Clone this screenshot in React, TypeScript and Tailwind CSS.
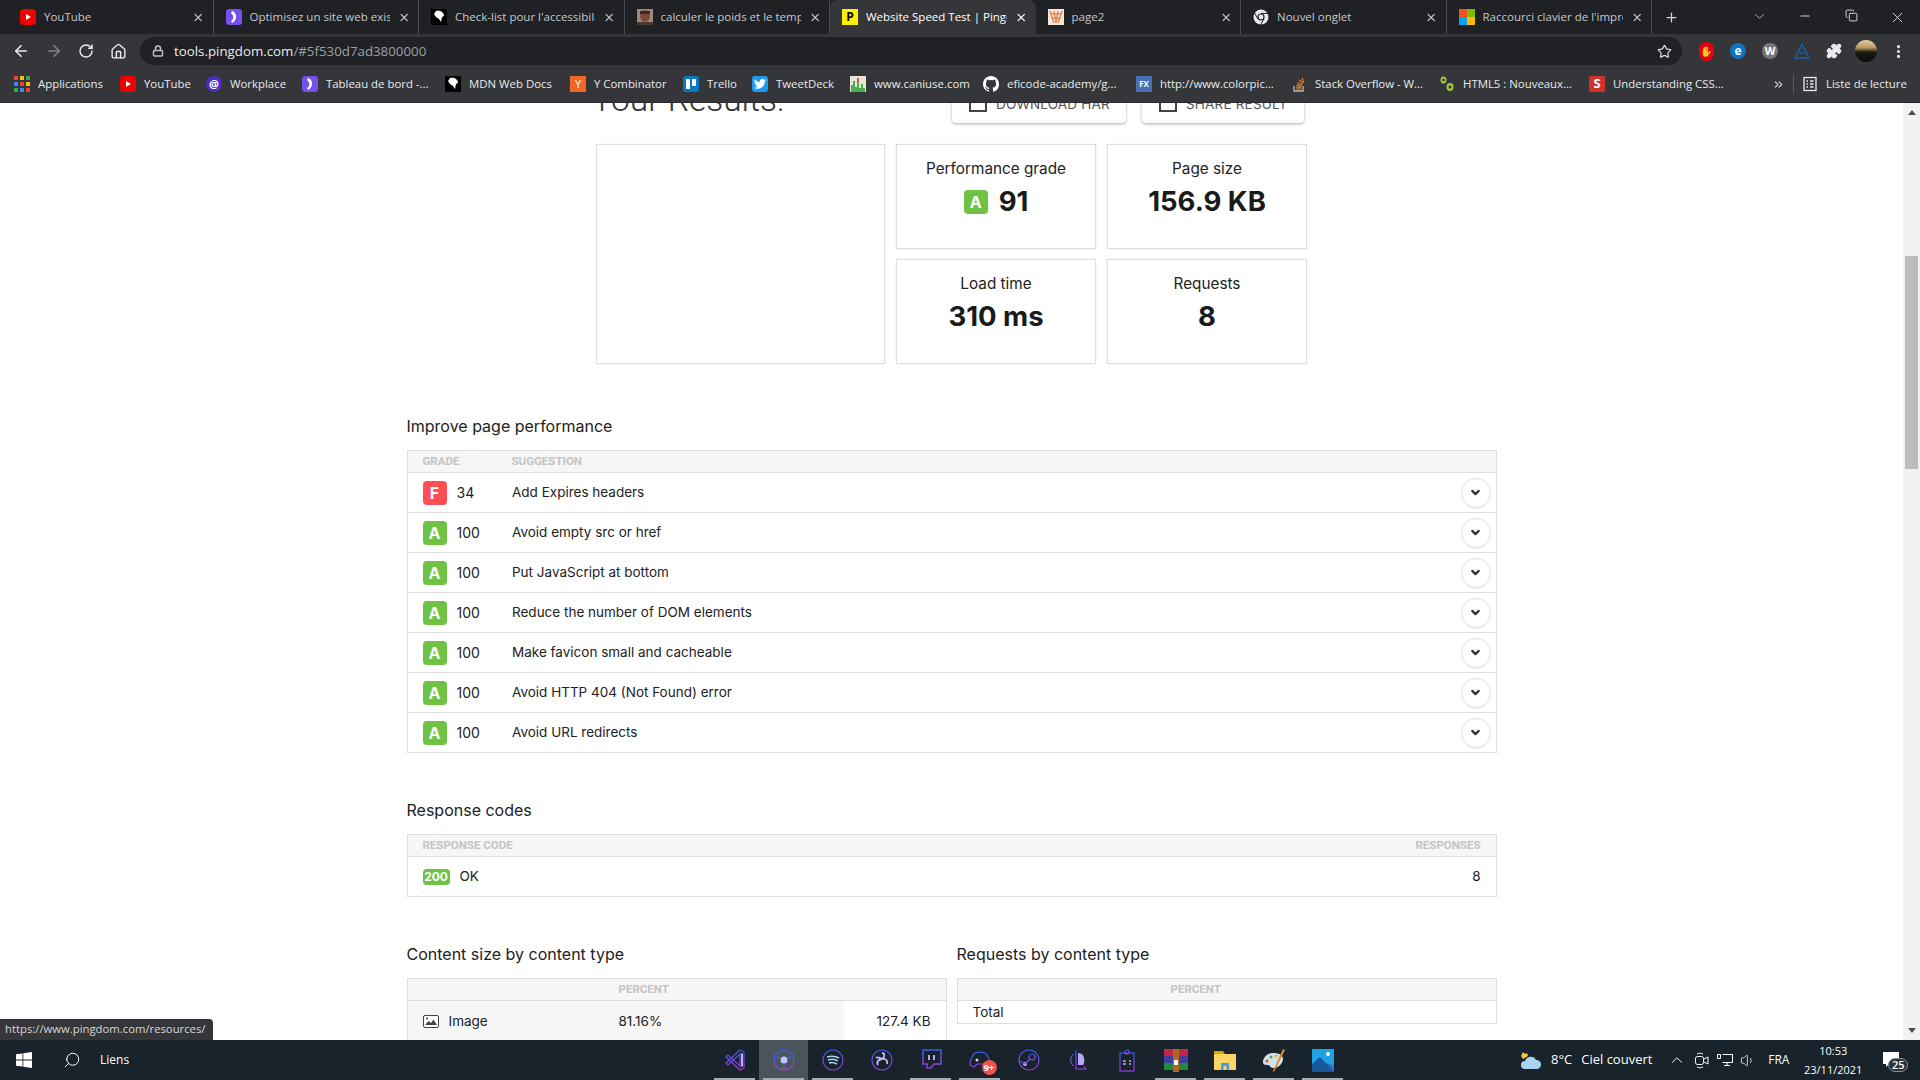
import type { ReactNode } from "react";
import {
  ArrowLeft,
  ArrowRight,
  ChevronDown,
  ChevronUp,
  ChevronsRight,
  Copy,
  Home,
  Lock,
  Minus,
  MoreVertical,
  Plus,
  Puzzle,
  RotateCw,
  Search,
  Star,
  Volume1,
  X,
} from "lucide-react";

const Box = ({ className, children }: { className: string; children?: ReactNode }) => (
  <span className={`flex h-4 w-4 shrink-0 items-center justify-center overflow-hidden ${className}`}>{children}</span>
);

const YoutubeIcon = () => (
  <Box className="rounded-[4px] bg-[#f00000]">
    <svg width="8" height="8" viewBox="0 0 8 8"><path d="M2 1l5 3-5 3z" fill="#fff" /></svg>
  </Box>
);
const ClassroomIcon = () => (
  <Box className="rounded-[3px] bg-[#7451eb]">
    <svg width="12" height="14" viewBox="0 0 12 14"><path d="M4 1c5 1 6 9 0 12l-1-2c3-1 3-6 0-8z" fill="#fff" /></svg>
  </Box>
);
const DinoIcon = () => (
  <Box className="bg-black">
    <svg width="12" height="14" viewBox="0 0 12 14"><path d="M3 1c4-1 8 1 8 5l-2 1-1 5-2-3-3-2-2-3z" fill="#fff" /></svg>
  </Box>
);
const PortraitIcon = () => (
  <Box className="bg-[#8b6b5c]">
    <svg width="16" height="16" viewBox="0 0 16 16">
      <rect width="16" height="16" fill="#9a8a80" />
      <ellipse cx="8" cy="7" rx="5" ry="6" fill="#7c4a3a" />
      <rect x="3" y="2" width="10" height="3" fill="#3d2a22" />
      <rect y="13" width="16" height="3" fill="#4a3a34" />
    </svg>
  </Box>
);
const PingdomIcon = () => (
  <Box className="bg-[#fff000] text-[12px] font-bold text-black">P</Box>
);
const Page2Icon = () => (
  <Box className="bg-[#f6e6d8]">
    <svg width="14" height="14" viewBox="0 0 14 14" fill="none" stroke="#d98a5a" strokeWidth="1.4">
      <path d="M1 1l4 12M5 1l2 12M9 1l-2 12M13 1L9 13M1 4h12M2 8h10" />
    </svg>
  </Box>
);
const ChromeIcon = () => (
  <svg width="16" height="16" viewBox="0 0 16 16" className="shrink-0">
    <circle cx="8" cy="8" r="7.5" fill="#e8eaed" />
    <circle cx="8" cy="8" r="3.6" fill="#202124" />
    <circle cx="8" cy="8" r="2.4" fill="#e8eaed" />
    <path d="M8 4.4h7M5 10l-3.4-6M11 10l-3.5 5.8" stroke="#202124" strokeWidth="1" />
  </svg>
);
const MicrosoftIcon = () => (
  <span className="grid h-4 w-4 shrink-0 grid-cols-2">
    <span className="bg-[#f25022]" />
    <span className="bg-[#7fba00]" />
    <span className="bg-[#00a4ef]" />
    <span className="bg-[#ffb900]" />
  </span>
);

const tabs = [
  { title: "YouTube", icon: <YoutubeIcon /> },
  { title: "Optimisez un site web existant", icon: <ClassroomIcon /> },
  { title: "Check-list pour l'accessibilité", icon: <DinoIcon /> },
  { title: "calculer le poids et le temps", icon: <PortraitIcon /> },
  { title: "Website Speed Test | Pingdom", icon: <PingdomIcon />, active: true },
  { title: "page2", icon: <Page2Icon /> },
  { title: "Nouvel onglet", icon: <ChromeIcon /> },
  { title: "Raccourci clavier de l'impression", icon: <MicrosoftIcon /> },
];

const AppsIcon = () => (
  <span className="grid h-4 w-4 shrink-0 grid-cols-3 gap-[2px]">
    {["#ea4335", "#fbbc05", "#34a853", "#4285f4", "#ea4335", "#fbbc05", "#34a853", "#4285f4", "#ea4335"].map((c, i) => (
      <span key={i} style={{ backgroundColor: c }} />
    ))}
  </span>
);

const bookmarks = [
  { label: "Applications", width: "w-[106px]", icon: <AppsIcon /> },
  { label: "YouTube", width: "w-[86px]", icon: <YoutubeIcon /> },
  {
    label: "Workplace",
    width: "w-[96px]",
    icon: <Box className="rounded-full bg-[#4a2fc4] text-[11px] font-bold text-white">@</Box>,
  },
  { label: "Tableau de bord -...", width: "w-[143px]", icon: <ClassroomIcon /> },
  { label: "MDN Web Docs", width: "w-[125px]", icon: <DinoIcon /> },
  { label: "Y Combinator", width: "w-[113px]", icon: <Box className="bg-[#f26522] text-[11px] text-white">Y</Box> },
  {
    label: "Trello",
    width: "w-[69px]",
    icon: (
      <Box className="gap-[2px] rounded-[3px] bg-[#0a79bf]">
        <span className="h-[10px] w-[4px] bg-white" />
        <span className="mb-[3px] h-[7px] w-[4px] bg-white" />
      </Box>
    ),
  },
  {
    label: "TweetDeck",
    width: "w-[98px]",
    icon: (
      <Box className="rounded-[3px] bg-[#1d9bf0]">
        <svg width="12" height="10" viewBox="0 0 24 20">
          <path d="M24 2.4a10 10 0 0 1-2.8.8A5 5 0 0 0 23.300.500a10 10 0 0 1-3.100 1.200 4.900 4.900 0 0 0-8.400 4.500A14 14 0 0 1 1.700.900a4.900 4.900 0 0 0 1.500 6.600 5 5 0 0 1-2.200-.6 4.900 4.900 0 0 0 3.900 4.900 5 5 0 0 1-2.200.1 4.900 4.900 0 0 0 4.600 3.400A10 10 0 0 1 0 17.300 14 14 0 0 0 21.500 5c1-.7 1.800-1.600 2.500-2.600z" fill="#fff" />
        </svg>
      </Box>
    ),
  },
  {
    label: "www.caniuse.com",
    width: "w-[133px]",
    icon: (
      <Box className="bg-[#e8e4d6]">
        <svg width="16" height="16" viewBox="0 0 16 16">
          <path d="M1 16V9h2V5h2v6h2V2h2v10h2V8h2v4h2v4z" fill="#4caf50" />
          <path d="M7 2h2v5H7z" fill="#b5654a" />
        </svg>
      </Box>
    ),
  },
  {
    label: "eficode-academy/g...",
    width: "w-[153px]",
    icon: (
      <svg width="16" height="16" viewBox="0 0 16 16" className="shrink-0">
        <path
          fill="#fff"
          d="M8 0C3.580 0 0 3.580 0 8c0 3.540 2.290 6.530 5.470 7.590.4.070.55-.17.55-.38v-1.340c-2.010.37-2.530-.49-2.690-.94-.09-.23-.48-.94-.82-1.130-.28-.15-.68-.52-.01-.53.63-.01 1.080.58 1.230.82.720 1.210 1.870.87 2.330.66.070-.52.28-.87.510-1.070-1.780-.2-3.640-.89-3.640-3.950 0-.87.310-1.590.820-2.150-.080-.2-.360-1.020.080-2.120 0 0 .670-.21 2.200.82a7.600 7.600 0 0 1 4 0c1.530-1.040 2.200-.82 2.200-.82.440 1.100.160 1.920.080 2.120.510.560.820 1.270.820 2.150 0 3.070-1.870 3.750-3.650 3.950.290.250.540.730.540 1.480v2.190c0 .210.150.460.550.380A8 8 0 0 0 16 8c0-4.420-3.580-8-8-8z"
        />
      </svg>
    ),
  },
  {
    label: "http://www.colorpic...",
    width: "w-[155px]",
    icon: <Box className="bg-[#4a6fb5] text-[8px] font-bold text-white">FX</Box>,
  },
  {
    label: "Stack Overflow - W...",
    width: "w-[148px]",
    icon: (
      <svg width="16" height="16" viewBox="0 0 16 16" fill="none" className="shrink-0">
        <path d="M3 10v5h9v-5" stroke="#bcbbbb" strokeWidth="1.3" />
        <path d="M5 13h5M5 11l5 .6M5.500 8.800l5 1.400M6.500 6.500l4.500 2.600M8.500 4l3.500 3.600M11 2l2 4.600" stroke="#f48024" strokeWidth="1.2" />
      </svg>
    ),
  },
  {
    label: "HTML5 : Nouveaux...",
    width: "w-[150px]",
    icon: (
      <svg width="16" height="16" viewBox="0 0 16 16" className="shrink-0">
        <ellipse cx="4.500" cy="4" rx="3" ry="3.500" fill="#a5c63b" />
        <ellipse cx="11" cy="11" rx="3.500" ry="4" fill="#a5c63b" />
        <circle cx="4.500" cy="4" r="1.300" fill="#35363a" />
        <circle cx="11" cy="11" r="1.500" fill="#35363a" />
      </svg>
    ),
  },
  {
    label: "Understanding CSS...",
    width: "w-[183px]",
    icon: <Box className="rounded-[2px] bg-[#d3322c] text-[13px] font-bold text-white">S</Box>,
  },
];

const suggestions = [
  { grade: "F", score: 34, text: "Add Expires headers" },
  { grade: "A", score: 100, text: "Avoid empty src or href" },
  { grade: "A", score: 100, text: "Put JavaScript at bottom" },
  { grade: "A", score: 100, text: "Reduce the number of DOM elements" },
  { grade: "A", score: 100, text: "Make favicon small and cacheable" },
  { grade: "A", score: 100, text: "Avoid HTTP 404 (Not Found) error" },
  { grade: "A", score: 100, text: "Avoid URL redirects" },
];

const Neon = ({ children }: { children: ReactNode }) => (
  <svg width="24" height="24" viewBox="0 0 24 24" fill="none" stroke="url(#neon)" strokeWidth="1.2">
    {children}
  </svg>
);

const taskbarApps: { key: string; icon: ReactNode; running?: boolean; active?: boolean }[] = [
  {
    key: "vscode",
    running: true,
    icon: (
      <Neon>
        <path d="M17 2l4 2v16l-4 2L3 9l2-2 12 11V6L5 17l-2-2z" />
        <path d="M18 5v14l2-1V6z" fill="#c7a6ff" stroke="none" />
      </Neon>
    ),
  },
  {
    key: "browser",
    running: true,
    active: true,
    icon: (
      <Neon>
        <circle cx="12" cy="12" r="10" />
        <circle cx="12" cy="12" r="3.500" fill="#b9c9ff" stroke="none" />
        <path d="M3 7l6 5M21 7l-6 5M12 15v7" />
      </Neon>
    ),
  },
  {
    key: "spotify",
    running: true,
    icon: (
      <Neon>
        <circle cx="12" cy="12" r="10" />
        <path d="M6 9c4-1 8-1 12 1M7 12c3-1 7-1 10 1M8 15c3-1 5-.5 8 1" stroke="#a9d8ff" strokeWidth="1.500" />
      </Neon>
    ),
  },
  {
    key: "obs",
    icon: (
      <Neon>
        <circle cx="12" cy="12" r="10" />
        <path d="M12 5c3 0 3 4 0 6-3 0-6 3-4 6M12 11c4-1 6 2 5 5M12 11c-3-2-5-2-6-1" stroke="#c8b6ff" strokeWidth="1.800" />
      </Neon>
    ),
  },
  {
    key: "twitch",
    running: true,
    icon: (
      <Neon>
        <path d="M4 2h18v14h-7l-3 4H8v-4H4z" strokeWidth="1.500" />
        <path d="M10 7v5M15 7v5" stroke="#c8b6ff" strokeWidth="1.800" />
      </Neon>
    ),
  },
  {
    key: "discord",
    running: true,
    icon: (
      <span className="relative flex">
        <Neon>
          <path d="M7 5c3-1 7-1 10 0 3 3 5 8 5 12l-4 2-3-3H9l-3 3-4-2c0-4 2-9 5-12z" />
          <circle cx="9" cy="12" r="1.500" fill="#c8d6ff" stroke="none" />
        </Neon>
        <span className="absolute right-[-5px] bottom-[-3px] flex h-[15px] w-[15px] items-center justify-center rounded-full bg-[#ef5350] text-[9px] leading-none font-bold text-white">
          9+
        </span>
      </span>
    ),
  },
  {
    key: "steam",
    icon: (
      <Neon>
        <circle cx="12" cy="12" r="10" />
        <circle cx="15" cy="9" r="3" />
        <circle cx="8" cy="16" r="2" fill="#c8b6ff" stroke="none" />
        <path d="M3 13l5 3 5-5" />
      </Neon>
    ),
  },
  {
    key: "league",
    icon: (
      <Neon>
        <path d="M10 2v19h10l-2-3" />
        <path d="M12 5c5 0 7 4 6 10l-1 2h-5z" fill="#b9a6ff" stroke="none" />
        <path d="M7 6c-3 4-3 8 0 12" />
      </Neon>
    ),
  },
  {
    key: "tasks",
    icon: (
      <Neon>
        <rect x="5" y="5" width="14" height="18" />
        <circle cx="12" cy="4" r="2" />
        <path d="M8 13h3M8 16h3M14 13h2M14 16h2" stroke="#b9a6ff" strokeWidth="1.500" />
      </Neon>
    ),
  },
  {
    key: "winrar",
    running: true,
    icon: (
      <svg width="24" height="24" viewBox="0 0 24 24">
        <rect y="1" width="24" height="7" fill="#c2274b" />
        <rect y="8" width="24" height="7" fill="#3f3f9f" />
        <rect y="15" width="24" height="7" fill="#1f8a3b" />
        <rect x="9" y="1" width="6" height="23" fill="#b5651d" />
        <rect x="10" y="12" width="4" height="5" fill="#fff" />
      </svg>
    ),
  },
  {
    key: "explorer",
    running: true,
    icon: (
      <svg width="24" height="24" viewBox="0 0 24 24">
        <path d="M1 3h9l2 3H1z" fill="#d9a404" />
        <rect x="1" y="6" width="22" height="16" fill="#fcd462" />
        <path d="M8 15h8v7h-2.500v-4h-3v4H8z" fill="#3f9fe0" />
      </svg>
    ),
  },
  {
    key: "paint",
    running: true,
    icon: (
      <svg width="24" height="24" viewBox="0 0 24 24">
        <path d="M11 5C5 5 1 10 1 14c0 3 3 3 5 3 2 0 2 3 5 3 6 0 10-5 10-9 0-4-4-6-10-6z" fill="#cfe3ea" />
        <circle cx="5" cy="13" r="1.500" fill="#e5484d" />
        <circle cx="9" cy="9" r="1.500" fill="#4caf50" />
        <circle cx="14" cy="8" r="1.500" fill="#f2b51d" />
        <path d="M21 1l2 1-11 22-1-1z" fill="#e0892f" />
      </svg>
    ),
  },
  {
    key: "photos",
    running: true,
    icon: (
      <svg width="24" height="24" viewBox="0 0 24 24">
        <rect x="1" y="1" width="22" height="23" fill="#1fa2e8" />
        <path d="M1 24V16l8-7 6 6 8 3v6z" fill="#17589c" />
        <path d="M9 9l6 6 8 3v6z" fill="#2f73c4" />
        <circle cx="17" cy="6" r="2" fill="#fff" />
      </svg>
    ),
  },
];

function Tab({ title, icon, active }: { title: string; icon: ReactNode; active?: boolean }) {
  return (
    <div
      className={`flex h-[34px] w-[205.5px] shrink-0 items-center gap-2 pr-[8px] pl-[12px] ${
        active ? "rounded-t-[8px] bg-[#35363a] text-white" : "border-r border-[#4a4b4f] text-[#c4c7cc]"
      }`}
    >
      {icon}
      <span className="w-[147px] overflow-hidden text-[11.5px] whitespace-nowrap">{title}</span>
      <X size={13} strokeWidth={2.5} className={active ? "text-white" : "text-[#c4c7cc]"} />
    </div>
  );
}

function GradeBadge({ grade }: { grade: string }) {
  return (
    <span
      className={`flex h-6 w-6 items-center justify-center rounded-[4px] text-[16px] font-bold text-white ${
        grade === "F" ? "bg-[#ff4e54]" : "bg-[#6fc244]"
      }`}
    >
      {grade}
    </span>
  );
}

function ResultCard({ label, children }: { label: string; children: ReactNode }) {
  return (
    <div className="flex h-[105px] flex-col items-center border border-[#dedede] pt-[14px] shadow-[0_0_1px_#ddd]">
      <div className="text-[15.3px] leading-[20px] text-[#222]">{label}</div>
      <div className="mt-[6px] flex h-[34px] items-center gap-[11px] text-[27.5px] font-bold text-[#1a1a1a]">
        {children}
      </div>
    </div>
  );
}

function OutlineButton({ label }: { label: string }) {
  return (
    <div className="flex h-[38px] items-center gap-[9px] rounded-[4px] bg-white px-[16.500px] text-[13.5px] tracking-[0.2px] text-[#555] shadow-[0_1px_3px_rgba(0,0,0,0.35)]">
      <span className="h-4 w-[18px] border-2 border-t-0 border-[#444]" />
      {label}
    </div>
  );
}

const thClass = "text-[11.5px] leading-none font-bold text-[#c4c4c4] uppercase font-['Roboto']";

export default function App() {
  return (
    <div className="flex h-[1080px] w-[1920px] flex-col overflow-hidden bg-white font-['Inter',sans-serif]">
      <svg className="absolute h-0 w-0">
        <defs>
          <linearGradient id="neon" x1="0" y1="0" x2="0" y2="1">
            <stop offset="0" stopColor="#3a5be8" />
            <stop offset="1" stopColor="#a13bd8" />
          </linearGradient>
        </defs>
      </svg>

      {/* Browser chrome */}
      <div className="shrink-0 font-['Open_Sans',sans-serif]">
        <div className="flex h-[34px] items-center bg-[#202124] pl-2">
          {tabs.map((tab) => (
            <Tab key={tab.title} title={tab.title} icon={tab.icon} active={tab.active} />
          ))}
          <Plus size={17} className="ml-[12px] text-[#d5d7da]" />
          <div className="ml-[57px] flex text-[#d5d7da]">
            <span className="flex w-[46px] justify-center"><ChevronDown size={15} strokeWidth={1.2} /></span>
            <span className="flex w-[46px] justify-center"><Minus size={14} strokeWidth={1.8} /></span>
            <span className="flex w-[46px] justify-center"><Copy size={13} strokeWidth={1.8} /></span>
            <span className="flex w-[46px] justify-center"><X size={17} strokeWidth={1.4} /></span>
          </div>
        </div>

        <div className="flex h-[34px] items-center bg-[#35363a] pl-[5px]">
          <span className="flex w-[32.500px] justify-center text-[#e8eaed]"><ArrowLeft size={18} strokeWidth={2.2} /></span>
          <span className="flex w-[32.500px] justify-center text-[#7f8286]"><ArrowRight size={18} strokeWidth={2.2} /></span>
          <span className="flex w-[32.500px] justify-center text-[#e8eaed]"><RotateCw size={16} strokeWidth={2.2} /></span>
          <span className="flex w-[32.500px] justify-center text-[#e8eaed]"><Home size={17} strokeWidth={2} /></span>
          <div className="ml-[5px] flex h-[28px] w-[1542px] items-center gap-[10px] rounded-full bg-[#202124] pr-[10px] pl-[12px]">
            <Lock size={12} strokeWidth={3} className="text-[#bdc1c6]" />
            <span className="flex-1 pt-[1px] text-[13.3px] text-[#e8eaed]">
              tools.pingdom.com<span className="text-[#9aa0a6]">/#5f530d7ad3800000</span>
            </span>
            <Star size={15} className="text-[#d5d7da]" />
          </div>
          <div className="ml-2 flex items-center">
            <span className="flex w-8 justify-center">
              <span className="flex h-[19px] w-[15px] items-center justify-center rounded-full bg-[#e60012] text-[10px] font-bold text-white">✋</span>
            </span>
            <span className="flex w-8 justify-center">
              <span className="flex h-4 w-4 items-center justify-center rounded-full bg-[#0f73bd] text-[12px] font-bold text-white">e</span>
            </span>
            <span className="flex w-8 justify-center">
              <span className="flex h-4 w-4 items-center justify-center rounded-full bg-[#777] text-[11px] font-bold text-white">W</span>
            </span>
            <span className="flex w-8 justify-center">
              <svg width="18" height="18" viewBox="0 0 18 18" fill="none" stroke="#1565b0" strokeWidth="1.300">
                <path d="M9 2l7 14H2z" />
                <path d="M6 11h6" />
              </svg>
            </span>
            <span className="flex w-8 justify-center text-[#e8eaed]"><Puzzle size={16} fill="currentColor" /></span>
            <span className="flex w-8 justify-center">
              <span className="h-[22px] w-[22px] rounded-full bg-[linear-gradient(#e5cf9b_0%,#b79a5c_35%,#1c1a14_55%,#0c0b09_100%)]" />
            </span>
            <span className="flex w-8 justify-center text-[#e8eaed]"><MoreVertical size={17} strokeWidth={2.500} /></span>
          </div>
        </div>

        <div className="flex h-[35px] items-center border-b border-[#2a2b2e] bg-[#35363a] pb-[2px] pl-[14px] text-[11.4px] text-[#e8eaed]">
          {bookmarks.map((b) => (
            <div key={b.label} className={`flex shrink-0 items-center gap-2 whitespace-nowrap ${b.width}`}>
              {b.icon}
              <span>{b.label}</span>
            </div>
          ))}
          <ChevronsRight size={13} className="text-[#d5d7da]" />
          <span className="mx-[8px] h-[18px] w-px bg-[#5a5b5f]" />
          <svg width="16" height="16" viewBox="0 0 16 16" fill="none" stroke="#e8eaed" strokeWidth="1.300" className="shrink-0">
            <rect x="2" y="1.500" width="12" height="13" />
            <path d="M4.500 5h1.500M4.500 8h1.500M4.500 11h1.500M8 5h3.500M8 8h3.500M8 11h3.500" />
          </svg>
          <span className="ml-[8px] whitespace-nowrap">Liste de lecture</span>
        </div>
      </div>

      {/* Page */}
      <div className="relative flex min-h-0 flex-1 overflow-hidden">
        <div className="min-w-0 flex-1 text-[13.5px] text-[#222]">
          <div className="mx-auto mt-[-24px] flex h-11 w-[711px] items-end justify-between">
            <div className="mb-[3px] ml-[-4px] font-['Roboto'] text-[33.5px] leading-[40px] font-light text-[#333]">Your Results:</div>
            <div className="mr-[3px] flex gap-4">
              <OutlineButton label="DOWNLOAD HAR" />
              <OutlineButton label="SHARE RESULT" />
            </div>
          </div>

          <div className="mx-auto mt-[21px] grid w-[711px] grid-cols-[289px_200px_200px] grid-rows-[105px_105px] gap-x-[11px] gap-y-[10px]">
            <div className="row-span-2 border border-[#dedede] shadow-[0_0_1px_#ddd]" />
            <ResultCard label="Performance grade">
              <GradeBadge grade="A" />
              91
            </ResultCard>
            <ResultCard label="Page size">156.9 KB</ResultCard>
            <ResultCard label="Load time">310 ms</ResultCard>
            <ResultCard label="Requests">8</ResultCard>
          </div>

          <div className="mx-auto w-[1090px]">
            <h2 className="mt-[48px] mb-[10px] text-[16px] leading-[28px]">Improve page performance</h2>
            <div className="border border-b-0 border-[#dedede]">
              <div className="flex h-[22px] items-center border-b border-[#dedede] bg-[#f6f6f6] pl-[15px]">
                <span className={`w-[89px] ${thClass}`}>Grade</span>
                <span className={thClass}>Suggestion</span>
              </div>
              {suggestions.map((s) => (
                <div key={s.text} className="flex h-10 items-center border-b border-[#dedede] pr-[5px] pl-[15px]">
                  <GradeBadge grade={s.grade} />
                  <span className="ml-[10px] w-[55.500px] text-[14px]">{s.score}</span>
                  <span className="flex-1">{s.text}</span>
                  <span className="flex h-[30px] w-[30px] items-center justify-center rounded-full border border-[#e2e2e2] shadow-[0_1px_1px_#eee]">
                    <ChevronDown size={13} strokeWidth={4} className="text-[#333]" />
                  </span>
                </div>
              ))}
            </div>

            <h2 className="mt-[43px] mb-[10px] text-[16px] leading-[28px]">Response codes</h2>
            <div className="border border-b-0 border-[#dedede]">
              <div className="flex h-[22px] items-center justify-between border-b border-[#dedede] bg-[#f6f6f6] px-[15px]">
                <span className={thClass}>Response code</span>
                <span className={thClass}>Responses</span>
              </div>
              <div className="flex h-10 items-center justify-between border-b border-[#dedede] px-[15px]">
                <span className="flex items-center gap-[10px]">
                  <span className="flex h-4 w-[27px] items-center justify-center rounded-[4px] bg-[#6fc244] text-[12px] font-bold text-white">200</span>
                  OK
                </span>
                <span>8</span>
              </div>
            </div>

            <div className="mt-[43px] grid grid-cols-[540px_540px] gap-x-[10px]">
              <div>
                <h2 className="mb-[10px] text-[16px] leading-[28px]">Content size by content type</h2>
                <div className="border border-[#dedede]">
                  <div className="flex h-[22px] items-center border-b border-[#dedede] bg-[#f6f6f6] pl-[211px]">
                    <span className={thClass}>Percent</span>
                  </div>
                  <div className="relative flex h-10 items-center px-[15px]">
                    <span className="absolute inset-y-0 left-0 w-[81.16%] bg-[#f6f6f6]" />
                    <svg width="16" height="13" viewBox="0 0 16 13" className="relative">
                      <rect x="0.500" y="0.500" width="15" height="12" rx="1.500" fill="#fff" stroke="#444" />
                      <path d="M2 10l3.500-4 2.500 2 2.500-3.500L14 10z" fill="#444" />
                      <circle cx="4" cy="3.500" r="1" fill="#444" />
                    </svg>
                    <span className="relative ml-[10px] w-[170px]">Image</span>
                    <span className="relative flex-1">81.16%</span>
                    <span className="relative">127.4 KB</span>
                  </div>
                </div>
              </div>
              <div>
                <h2 className="mb-[10px] text-[16px] leading-[28px]">Requests by content type</h2>
                <div className="border border-[#dedede]">
                  <div className="flex h-[22px] items-center border-b border-[#dedede] bg-[#f6f6f6] pl-[213px]">
                    <span className={thClass}>Percent</span>
                  </div>
                  <div className="flex h-[22px] items-center px-[15px]">Total</div>
                </div>
              </div>
            </div>
          </div>
        </div>

        {/* Page scrollbar */}
        <div className="flex w-[17px] shrink-0 flex-col items-center bg-[#f1f1f1] pt-[7px] pb-[7px]">
          <svg width="8" height="5" viewBox="0 0 8 5"><path d="M4 0l4 5H0z" fill="#505050" /></svg>
          <div className="mt-[141px] h-[213px] w-[13px] bg-[#bcbcbc]" />
          <svg width="8" height="5" viewBox="0 0 8 5" className="mt-auto"><path d="M4 5l4-5H0z" fill="#505050" /></svg>
        </div>

        {/* Link preview bubble */}
        <div className="absolute bottom-0 left-0 flex h-[21px] w-[213px] items-center rounded-tr-[4px] bg-[#35363a] pl-[5px] font-['Open_Sans',sans-serif] text-[11.3px] text-[#d5d7da]">
          https://www.pingdom.com/resources/
        </div>
      </div>

      {/* Windows taskbar */}
      <div className="flex h-10 shrink-0 items-center bg-[#19232b] font-['Open_Sans',sans-serif] text-white">
        <div className="flex w-[710px] items-center">
          <span className="flex w-12 justify-center">
            <svg width="16" height="16" viewBox="0 0 16 16"><path d="M0 2.300l6.500-.9v6.200H0zM7.300 1.300L16 0v7.600H7.300zM0 8.400h6.500v6.200L0 13.700zM7.300 8.400H16V16l-8.700-1.300z" fill="#fff" /></svg>
          </span>
          <span className="flex w-12 justify-center"><Search size={18} strokeWidth={1.300} className="-scale-x-100" /></span>
          <span className="ml-[4px] text-[12px]">Liens</span>
        </div>

        <div className="flex">
          {taskbarApps.map((app) => (
            <div
              key={app.key}
              className={`relative flex h-10 w-[49px] items-center justify-center ${app.active ? "bg-[#4a555b]" : ""}`}
            >
              {app.icon}
              {app.running && <span className="absolute inset-x-[4px] bottom-0 h-[2px] bg-[#a9adaf]" />}
            </div>
          ))}
        </div>

        <div className="ml-[173px] flex flex-1 items-center text-[13px]">
          <svg width="22" height="20" viewBox="0 0 22 20" className="shrink-0">
            <path d="M3 2l2 2 2-1 1 3-5 3-2-3z" fill="#f5c542" />
            <path d="M5 19a4 4 0 0 1 0-8 6 6 0 0 1 11-1 4.500 4.500 0 0 1 1 9z" fill="#a8d4ee" />
          </svg>
          <span className="ml-[9px]">8°C</span>
          <span className="ml-[9px] w-[87px] whitespace-nowrap">Ciel couvert</span>
          <ChevronUp size={18} strokeWidth={1.300} />
          <span className="ml-[7px] flex w-[16px] justify-center">
            <svg width="15" height="17" viewBox="0 0 15 17" fill="none" stroke="#fff"><rect x="1.500" y="4.500" width="8" height="8" rx="2" /><path d="M10 7l4-2v7l-4-2M3 2c2-1 4-1 6 0M3 15c2 1 4 1 6 0" /></svg>
          </span>
          <span className="ml-[8px] flex w-[16px] justify-center">
            <svg width="16" height="15" viewBox="0 0 16 15" fill="none" stroke="#fff"><path d="M5.500 1.500h10v8h-10M10 9.500v3M7 12.500h6M.5 1.500h3v4h-3z" /></svg>
          </span>
          <span className="ml-[7px] flex w-[16px] justify-center"><Volume1 size={17} strokeWidth={1.200} /></span>
          <span className="ml-[12px] w-[22px] text-[12px]">FRA</span>
          <div className="ml-[8px] flex w-[70px] flex-col items-center text-[11px] leading-[19px]">
            <span>10:53</span>
            <span>23/11/2021</span>
          </div>
          <span className="relative ml-[15px] flex">
            <svg width="16" height="16" viewBox="0 0 16 16"><path d="M0 0h16v12H6l-3 3v-3H0z" fill="#fff" /></svg>
            <span className="absolute top-[6px] left-[5px] flex h-[14px] w-[20px] items-center justify-center rounded-full border border-[#8a8f93] bg-[#2b3339] text-[11px] font-semibold">25</span>
          </span>
        </div>
      </div>
    </div>
  );
}
